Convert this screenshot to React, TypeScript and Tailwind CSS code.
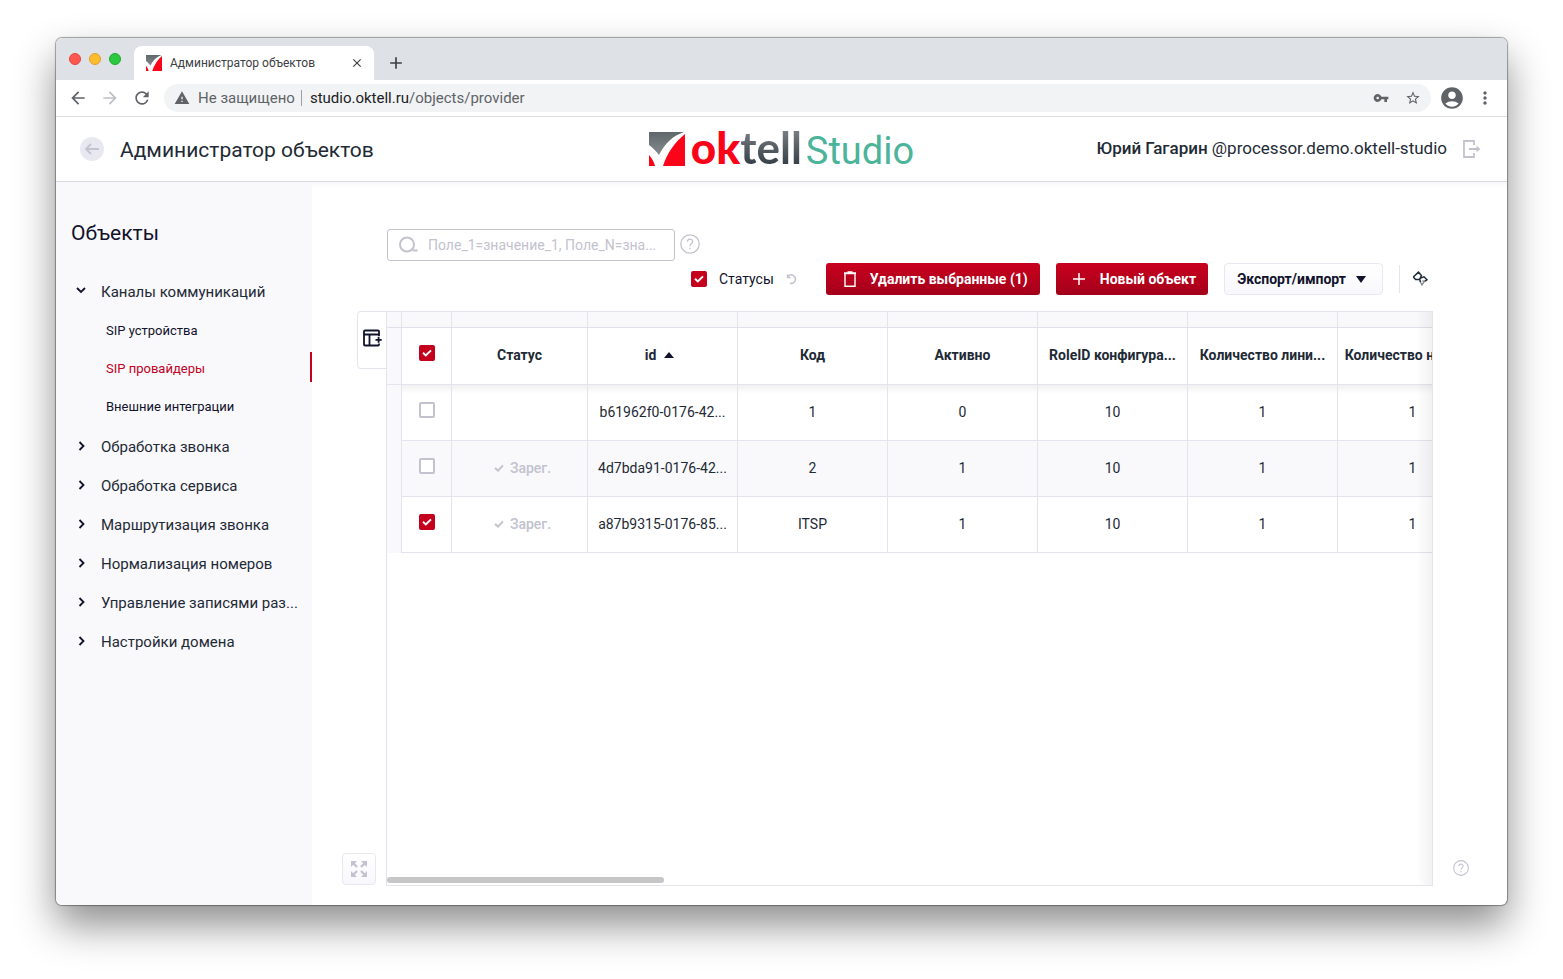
import { useState } from 'react'
import type { ReactNode } from 'react'
import {
  MdArrowBack,
  MdArrowForward,
  MdRefresh,
  MdWarning,
  MdVpnKey,
  MdStarBorder,
  MdAccountCircle,
  MdMoreVert,
  MdClose,
  MdAdd,
} from 'react-icons/md'

const menu = [
  'Обработка звонка',
  'Обработка сервиса',
  'Маршрутизация звонка',
  'Нормализация номеров',
  'Управление записями раз...',
  'Настройки домена',
]

const channels = ['SIP устройства', 'SIP провайдеры', 'Внешние интеграции']

const columns = ['Код', 'Активно', 'RoleID конфигура...', 'Количество лини...', 'Количество номер...']

const providers = [
  { id: 'b61962f0-0176-42...', registered: false, checked: false, values: ['1', '0', '10', '1', '1'] },
  { id: '4d7bda91-0176-42...', registered: true, checked: false, values: ['2', '1', '10', '1', '1'] },
  { id: 'a87b9315-0176-85...', registered: true, checked: true, values: ['ITSP', '1', '10', '1', '1'] },
]

const Mark = ({ className, id }: { className: string; id: string }) => (
  <svg viewBox="0 0 36 34" preserveAspectRatio="none" className={className} aria-hidden="true">
    <defs>
      <linearGradient id={id} x1="0" y1="0" x2="0" y2="1">
        <stop offset="0" stopColor="#5f676b" />
        <stop offset="1" stopColor="#858c90" />
      </linearGradient>
    </defs>
    <path d="M0 0H35C24 4 16 11 10 23C7 19 4 16 0 13Z" fill={`url(#${id})`} />
    <path d="M36 2V34H14C18 21 26 10 36 2Z" fill="#fb0318" />
    <path d="M0 23C3 26 5 30 6 34H0Z" fill="#fb0318" />
  </svg>
)

const Logo = () => (
  <div className="flex h-10 items-center" role="img" aria-label="oktell Studio">
    <Mark id="logo" className="h-[34px] w-9" />
    <span className="ml-1.5 flex items-baseline leading-10">
      <span className="font-[Lato] text-[44px] font-black text-[#fb0318]">ok</span>
      <span className="bg-linear-to-b from-[#80868a] to-[#323c43] bg-clip-text font-[Lato] text-[44px] font-bold text-transparent">tell</span>
      <span className="ml-1 font-[Roboto] text-[38px] text-[#4bb49b]">Studio</span>
    </span>
  </div>
)

const CheckBox = ({ label, checked }: { label: string; checked?: boolean }) => {
  const [on, setOn] = useState(!!checked)
  return (
    <span className="relative inline-flex size-4 shrink-0">
      <input
        type="checkbox"
        aria-label={label}
        checked={on}
        onChange={() => setOn(!on)}
        className="size-4 appearance-none rounded-[2px] border-2 border-[#c3c2ce] bg-white checked:border-[#c4001d] checked:bg-[#c4001d]"
      />
      {on && (
        <svg viewBox="0 0 16 16" className="pointer-events-none absolute inset-0 size-4" fill="none" stroke="#fff" strokeWidth="2">
          <path d="M4 7.8L6.8 10.4L12 5.4" />
        </svg>
      )}
    </span>
  )
}

const Chevron = ({ open }: { open?: boolean }) => (
  <svg viewBox="0 0 10 10" className="mb-1 size-2.5 shrink-0" fill="none" stroke="#11122b" strokeWidth="1.8">
    <path d={open ? 'M1 3L5 7L9 3' : 'M3.5 1L7.5 5L3.5 9'} />
  </svg>
)

const Help = ({ className }: { className: string }) => (
  <svg viewBox="0 0 20 20" className={className} fill="none" stroke="#c3c2ce" strokeWidth="1.3">
    <circle cx="10" cy="10" r="9.2" />
    <path d="M7.4 7.8C7.4 4.2 12.7 4.4 12.7 7.5C12.7 9.6 10 9.6 10 12.2" />
    <path d="M10 13.8V15.2" />
  </svg>
)

const BrowserBar = () => (
  <>
    <div className="flex h-[42px] shrink-0 items-end bg-[#dee1e6]">
      <div className="mb-[15px] ml-[13px] flex gap-2">
        <span className="size-3 rounded-full border border-[#e2443e] bg-[#fe5750]"></span>
        <span className="size-3 rounded-full border border-[#e0a02a] bg-[#fdbc2e]"></span>
        <span className="size-3 rounded-full border border-[#1eaa2d] bg-[#2bc840]"></span>
      </div>
      <div className="ml-[13px] flex h-[34px] w-60 items-center rounded-t-lg bg-white pr-2.5 pl-3">
        <Mark id="favicon" className="size-4" />
        <span className="ml-2 flex-1 text-xs text-[#3c4043]">Администратор объектов</span>
        <button aria-label="Закрыть вкладку"><MdClose className="size-3.5 text-[#3c4043]" /></button>
      </div>
      <button aria-label="Новая вкладка" className="mb-[7px] ml-3"><MdAdd className="size-5 text-[#3c4043]" /></button>
    </div>
    <div className="flex h-[37px] shrink-0 items-center border-b border-[#dcdde3] px-3 text-[#5f6368]">
      <button aria-label="Назад"><MdArrowBack className="size-5" /></button>
      <button aria-label="Вперёд" className="ml-3"><MdArrowForward className="size-5 text-[#bdc0c4]" /></button>
      <button aria-label="Обновить" className="ml-3"><MdRefresh className="size-5" /></button>
      <div className="ml-3 flex h-7 flex-1 items-center rounded-full bg-[#f1f3f4] px-2.5 text-[15px]">
        <MdWarning className="size-4" />
        <span className="ml-2">Не защищено</span>
        <span className="mr-2 ml-1.5 h-4 w-px bg-[#9aa0a6]"></span>
        <span><span className="text-[#202124]">studio.oktell.ru</span>/objects/provider</span>
        <MdVpnKey className="ml-auto size-4" />
        <MdStarBorder className="ml-4 size-4" />
      </div>
      <MdAccountCircle className="ml-2 size-[26px]" />
      <MdMoreVert className="ml-2.5 size-5" />
    </div>
  </>
)

const Header = () => (
  <header className="grid h-[65px] shrink-0 grid-cols-[1fr_auto_1fr] items-center border-b border-[#d8d9e2] px-6 text-[#1e2a35]">
    <div className="flex items-center gap-4">
      <button aria-label="Назад к списку" className="flex size-6 items-center justify-center rounded-full bg-[#e8e8f1]">
        <svg viewBox="0 0 16 16" className="size-4" fill="none" stroke="#c3c2ce" strokeWidth="1.8">
          <path d="M15 8H2M7 3L2 8L7 13" />
        </svg>
      </button>
      <h1 className="pt-0.5 text-[21px] leading-8">Администратор объектов</h1>
    </div>
    <Logo />
    <div className="flex items-center justify-end">
      <p className="text-[17px] whitespace-nowrap"><span className="font-medium">Юрий Гагарин</span> @processor.demo.oktell-studio</p>
      <button aria-label="Выйти" className="ml-4">
        <svg viewBox="0 0 20 18" className="h-[18px] w-5" fill="none" stroke="#c3c2ce" strokeWidth="1.8">
          <path d="M11 5V1H1V17H11V13M6 9H16" />
          <path d="M13.5 5.8L17.5 9L13.5 12.2Z" fill="#c3c2ce" stroke="none" />
        </svg>
      </button>
    </div>
  </header>
)

const Sidebar = () => (
  <nav className="w-64 shrink-0 bg-[#f9f9fc] pt-[35px] text-[#1e2a35]">
    <h2 className="pl-[15px] text-[21px] leading-8 text-[#11122b]">Объекты</h2>
    <a href="#channels" className="mt-[23px] flex h-10 items-center gap-[15px] pl-5 text-[15px]">
      <Chevron open />
      Каналы коммуникаций
    </a>
    <ul className="text-[#11122b]">
      {channels.map((name) => (
        <li key={name} className="flex h-[38px] items-center pb-1">
          <a
            href="#channel"
            className={
              name === 'SIP провайдеры'
                ? 'flex h-[30px] flex-1 items-center border-r-2 border-[#c4001d] pt-1 pl-[50px] text-[13px] text-[#c4001d]'
                : 'flex h-[30px] flex-1 items-center pt-1 pl-[50px] text-[13px]'
            }
          >
            {name}
          </a>
        </li>
      ))}
    </ul>
    <ul className="pt-0.5">
      {menu.map((name) => (
        <li key={name}>
          <a href="#section" className="flex h-[39px] items-center gap-[15px] pl-5 text-[15px] whitespace-nowrap">
            <Chevron />
            {name}
          </a>
        </li>
      ))}
    </ul>
  </nav>
)

const Toolbar = () => (
  <div className="mt-0.5 flex h-8 items-center justify-end pr-[79px] text-sm text-[#11122b]">
    <span className="mr-3 flex"><CheckBox label="Статусы" checked /></span>
    <span className="text-sm">Статусы</span>
    <button aria-label="Обновить статусы" className="ml-3">
      <svg viewBox="0 0 12 12" className="size-3" fill="none" stroke="#c3c2ce" strokeWidth="1.5">
        <path d="M2 3.4A4.2 4.2 0 1 1 4.2 10.2" />
        <path d="M0.8 0.8V5.2H5.2Z" fill="#c3c2ce" stroke="none" />
      </svg>
    </button>
    <button className="ml-7 flex h-8 items-center rounded-[3px] bg-linear-to-b from-[#c9001e] to-[#a3001a] px-3 font-bold text-white">
      <svg viewBox="0 0 16 18" className="mr-3 ml-1 h-[18px] w-4" fill="none" stroke="#fff" strokeWidth="1.4">
        <path d="M3 4V16.3H13V4" />
        <path d="M2 3.2H14M5.5 2.2H10.5" strokeWidth="2" />
      </svg>
      Удалить выбранные (1)
    </button>
    <button className="ml-4 flex h-8 items-center rounded-[3px] bg-linear-to-b from-[#c9001e] to-[#a3001a] px-3 font-bold text-white">
      <svg viewBox="0 0 14 14" className="mr-3.5 ml-1 size-3.5" fill="none" stroke="#fff" strokeWidth="1.5">
        <path d="M7 1V13M1 7H13" />
      </svg>
      Новый объект
    </button>
    <button className="ml-4 flex h-8 items-center rounded border border-[#e8e8f1] bg-linear-to-b from-white to-[#f8f8fc] px-3 font-bold">
      Экспорт/импорт
      <svg viewBox="0 0 10 7" className="mr-1 ml-2.5 h-[7px] w-2.5"><path d="M0 0H10L5 7Z" fill="#11122b" /></svg>
    </button>
    <span className="mr-3 ml-4 h-7 w-px bg-[#e5e4ee]"></span>
    <button aria-label="Закрепить">
      <svg viewBox="0 0 16 16" className="size-4" fill="none" stroke="#1e2a35" strokeWidth="1.5">
        <path d="M1.3 6L6.5 1.2L9.4 4.6L8.2 7.2L12 5.8L15 8.8L12.2 10.6" />
        <path d="M1.3 6L3.6 8.4L7.8 8.4L8.4 11.2" />
        <path d="M8.4 11.2L10 13.8L12.2 10.6L10.4 9.8" stroke="#8b919a" />
      </svg>
    </button>
  </div>
)

const Th = ({ children }: { children?: ReactNode }) => (
  <th className="border-r border-b border-[#e5e4ee] px-1 pb-0.5 font-bold whitespace-nowrap">{children}</th>
)

const Td = ({ children }: { children?: ReactNode }) => (
  <td className="border-r border-b border-[#e5e4ee] px-1 pb-0.5 whitespace-nowrap">{children}</td>
)

const ProviderTable = () => (
  <div className="relative flex min-w-0 flex-1 flex-col overflow-hidden border border-[#e5e4ee]">
    <table className="w-[1101px] table-fixed border-separate border-spacing-0 text-center text-sm text-[#1e2a35]">
      <colgroup>
        <col className="w-[15px]" />
        <col className="w-[50px]" />
        <col className="w-[136px]" />
        <col className="w-[150px]" />
        {columns.map((name) => <col key={name} className="w-[150px]" />)}
      </colgroup>
      <thead>
        <tr className="h-4 bg-[#f9f9fc]">
          {Array.from({ length: 9 }, (_, i) => (
            <td key={i} className="border-r border-b border-[#e5e4ee] p-0"></td>
          ))}
        </tr>
        <tr className="h-[57px] shadow-[0_3px_8px_rgba(0,0,0,0.08)]">
          <td className="border-r border-b border-[#e5e4ee] bg-[#f9f9fc]"></td>
          <th className="border-r border-b border-[#e5e4ee] pb-1 align-middle leading-none"><CheckBox label="Выбрать все" checked /></th>
          <Th>Статус</Th>
          <Th>
            <span className="inline-flex items-center gap-2 pr-1.5">
              id
              <svg viewBox="0 0 10 6" className="h-1.5 w-2.5"><path d="M0 6H10L5 0Z" fill="#11122b" /></svg>
            </span>
          </Th>
          {columns.map((name) => <Th key={name}>{name}</Th>)}
        </tr>
      </thead>
      <tbody>
        {providers.map((row) => (
          <tr key={row.id} className="h-14 even:bg-[#f9f9fc]">
            <td className="border-r border-[#e5e4ee] bg-[#f9f9fc]"></td>
            <td className="border-r border-b border-[#e5e4ee] pb-1 align-middle leading-none">
              <CheckBox label={row.id} checked={row.checked} />
            </td>
            <Td>
              {row.registered && (
                <span className="inline-flex items-center gap-1.5 pl-1.5 font-medium text-[#c3c2ce]">
                  <svg viewBox="0 0 10 8" className="h-2 w-2.5" fill="none" stroke="#c3c2ce" strokeWidth="2">
                    <path d="M1 4L4 6.6L9 1.4" />
                  </svg>
                  Зарег.
                </span>
              )}
            </Td>
            <Td>{row.id}</Td>
            {row.values.map((value, i) => <Td key={i}>{value}</Td>)}
          </tr>
        ))}
      </tbody>
    </table>
    <div className="mt-auto mb-0.5 h-1.5 w-[26.5%] rounded-full bg-[#c6c6c6]"></div>
    <div className="pointer-events-none absolute inset-y-0 right-0 w-4 bg-linear-to-r from-transparent to-black/5"></div>
  </div>
)

const App = () => {
  return (
    <div className="flex min-h-screen flex-col bg-white px-14 pt-[38px] pb-[74px] font-[Roboto,sans-serif]">
      <div className="flex flex-1 flex-col overflow-hidden rounded-md bg-white shadow-[0_0_1px_1px_rgba(0,0,0,0.35),0_20px_40px_rgba(0,0,0,0.45)]">
        <BrowserBar />
        <Header />
        <div className="flex flex-1">
          <Sidebar />
          <main className="flex min-w-0 flex-1 flex-col pt-[47px] pb-[19px] shadow-[inset_0_6px_8px_-6px_rgba(0,0,0,0.06)]">
            <div className="flex h-8 items-center pl-[75px]">
              <label className="flex h-8 w-72 items-center rounded-[3px] border border-[#c3c2ce] px-2.5">
                <svg viewBox="0 0 20 18" className="h-[18px] w-5 shrink-0" fill="none" stroke="#c3c2ce" strokeWidth="2">
                  <circle cx="9" cy="8.5" r="7" />
                  <path d="M13.5 13L16 14.6H19.5" />
                </svg>
                <input
                  aria-label="Фильтр"
                  placeholder="Поле_1=значение_1, Поле_N=зна..."
                  className="ml-2.5 min-w-0 flex-1 text-sm outline-none placeholder:text-[#c3c2ce]"
                />
              </label>
              <button aria-label="Справка по фильтру" className="mb-0.5 ml-[5px]"><Help className="size-5" /></button>
            </div>
            <Toolbar />
            <div className="mt-4 flex flex-1">
              <div className="flex w-[74px] shrink-0 flex-col justify-between">
                <button aria-label="Добавить колонку" className="flex h-[58px] w-[29px] items-center justify-center self-end rounded-l border border-r-0 border-[#e5e4ee] pb-1">
                  <svg viewBox="0 0 20 18" className="h-[18px] w-5" fill="none" stroke="#11122b" strokeWidth="1.8">
                    <path d="M17 7V2.5Q17 1.5 16 1.5H3Q2 1.5 2 2.5V15.5Q2 16.5 3 16.5H16Q17 16.5 17 15.5V14.5M2 5.5H17M7.5 5.5V16.5" />
                    <path d="M13.5 10.8H19.7M16.6 7.8V13.8" />
                  </svg>
                </button>
                <button aria-label="На весь экран" className="mb-px ml-[30px] flex h-8 w-[34px] items-center justify-center rounded border border-[#e8e8f1] bg-linear-to-b from-white to-[#f8f8fc]">
                  <svg viewBox="0 0 18 18" className="size-[18px]" fill="#c3c2ce" stroke="#c3c2ce" strokeWidth="2.4">
                    <path d="M1 1H7L1 7ZM17 1V7L11 1ZM1 17V11L7 17ZM17 17H11L17 11Z" stroke="none" />
                    <path d="M3 3L7 7M15 3L11 7M3 15L7 11M15 15L11 11" />
                  </svg>
                </button>
              </div>
              <ProviderTable />
              <div className="flex w-[74px] shrink-0 flex-col justify-end pb-2.5 pl-5">
                <button aria-label="Справка" className="w-4"><Help className="size-4" /></button>
              </div>
            </div>
          </main>
        </div>
      </div>
    </div>
  )
}

export default App
